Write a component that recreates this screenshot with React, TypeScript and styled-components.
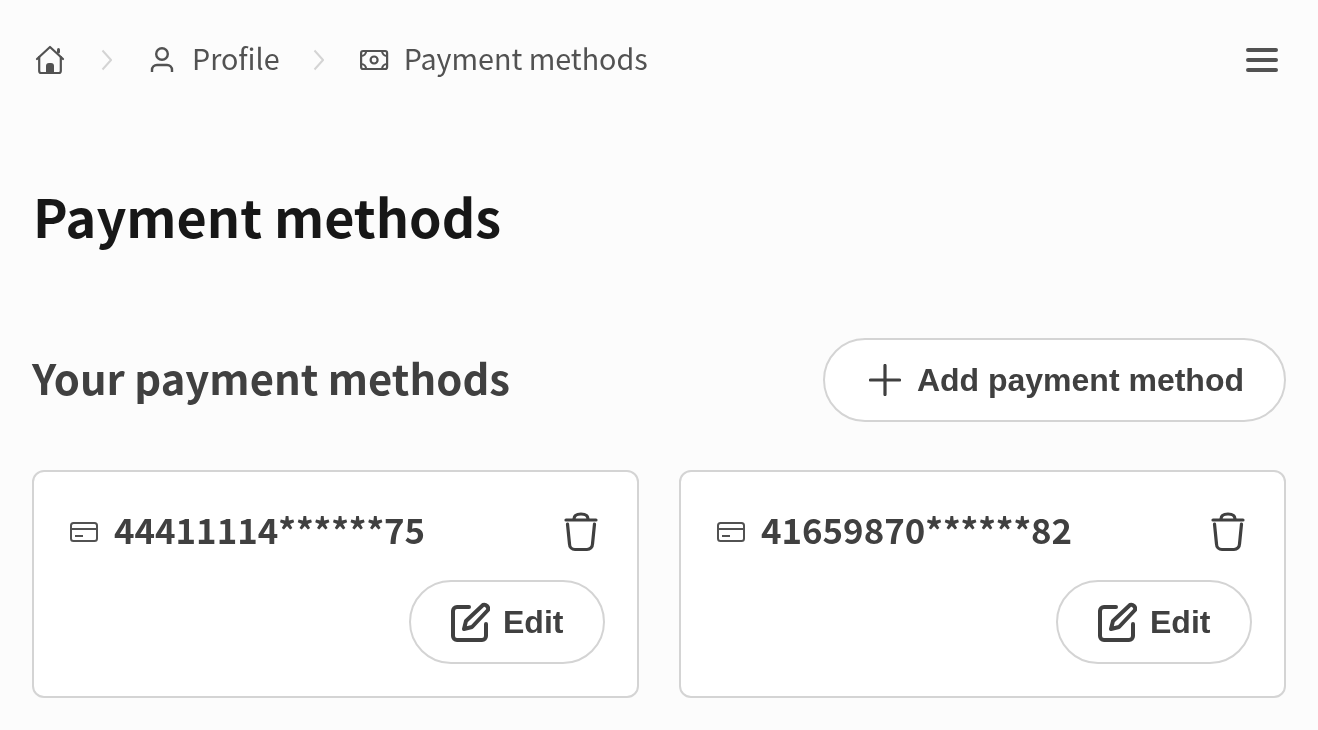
import React from "react";
import styled, { createGlobalStyle } from "styled-components";

const Global = createGlobalStyle`
  html, body { margin: 0; padding: 0; background: #fcfcfc; }
  body { font-family: "Noto Sans CJK JP", "Noto Sans", sans-serif; color: #404040; }
`;
const Page = styled.div`
  width: 1318px; height: 730px; box-sizing: border-box; padding: 32px 32px 0; overflow: hidden;
  display: flex; flex-direction: column; will-change: transform;
`;
const Nav = styled.nav`
  display: flex; align-items: center; justify-content: space-between; height: 56px; padding-right: 8px;
`;
const Crumbs = styled.div`display: flex; align-items: center; gap: 34px; padding-left: 2px;`;
const Crumb = styled.div<{ $gap?: number }>`
  display: flex; align-items: center; gap: ${p => p.$gap ?? 14}px; font-size: 28.7px; line-height: 56px; color: #525252;
`;
const CrumbLabel = styled.span`padding-bottom: 4px;`;
const Sep = styled.span<{ $pull?: number }>`
  display: flex; color: #d4d4d4; margin: 0 ${p => p.$pull ?? 0}px 0 ${p => -(p.$pull ?? 0)}px;
`;
const Title = styled.h1`
  margin: 96px 0 0; font-size: 52.1px; line-height: 64px; font-weight: 700; color: #171717; padding-left: 1px;
`;
const SectionHead = styled.div`
  display: flex; align-items: center; justify-content: space-between; margin-top: 90px;
`;
const H2 = styled.h2`margin: 0; font-size: 41.8px; line-height: 78px; padding-bottom: 6px; font-weight: 700; color: #404040;`;
const PillButton = styled.button`
  display: flex; align-items: center; box-sizing: border-box; height: 84px; border: 2px solid #d4d4d4;
  border-radius: 42px; background: #fff; color: #404040; cursor: pointer;
  font-family: "Liberation Sans", Arial, sans-serif; font-weight: 700; font-size: 32px;
  padding: 0 40px 0 44px; gap: 16px;
`;
const Cards = styled.div`display: grid; grid-template-columns: 607px 607px; gap: 40px; margin-top: 48px;`;
const Card = styled.div`
  box-sizing: border-box; height: 228px; border: 2px solid #d4d4d4; border-radius: 12px; background: #fff;
  padding: 32px 32px 32px 36px; display: flex; flex-direction: column; justify-content: space-between;
`;
const CardTop = styled.div`display: flex; align-items: center; justify-content: space-between; padding-right: 7px;`;
const CardNum = styled.div`
  display: flex; align-items: center; gap: 16px; font-size: 34.8px; font-weight: 700; line-height: 50px; color: #404040;
`;
const CardNumber = styled.span`padding-bottom: 6px;`;
const CardActions = styled.div`display: flex; justify-content: flex-end;`;
const EditButton = styled(PillButton)`padding: 0 0 0 39px; gap: 13px; width: 196px;`;

const Home = () => (
  <svg width="32" height="32" viewBox="0 0 32 32" fill="none" stroke="#525252" strokeWidth="2.2" strokeLinejoin="round" strokeLinecap="round">
    <path d="M3 15 L16 3 L29 15" />
    <path d="M5.200 13 V27 a2 2 0 0 0 2 2 H24.800 a2 2 0 0 0 2 -2 V13" />
    <path d="M24.500 8 V5.500" strokeWidth="3" />
    <path d="M12 29 V22 a3 3 0 0 1 3 -3 H17 a3 3 0 0 1 3 3 V29 Z" fill="#525252" stroke="none" />
  </svg>
);
const Chevron = () => (
  <svg width="12" height="22" viewBox="0 0 12 22" fill="none" stroke="currentColor" strokeWidth="2">
    <path d="M2.500 1.500 L11 11 L2.500 20.500" />
  </svg>
);
const User = () => (
  <svg width="30" height="28" viewBox="0 0 30 28" fill="none" stroke="#525252" strokeWidth="2.4">
    <circle cx="16" cy="8" r="5.800" />
    <path d="M6 26 V24 a5 5 0 0 1 5 -5 H21 a5 5 0 0 1 5 5 V26" />
  </svg>
);
const Money = () => (
  <svg width="30" height="24" viewBox="0 0 30 24" fill="none" stroke="#525252" strokeWidth="2.2">
    <rect x="1.100" y="3" width="26" height="18" rx="2" />
    <circle cx="14.100" cy="12" r="3.500" />
    <path d="M1.100 8 a5 5 0 0 0 5 -5 M22.100 3 a5 5 0 0 0 5 5 M1.100 16 a5 5 0 0 1 5 5 M22.100 21 a5 5 0 0 1 5 -5" />
  </svg>
);
const Menu = () => (
  <svg width="32" height="24" viewBox="0 0 32 24" fill="none" stroke="#525252" strokeWidth="4" strokeLinecap="round">
    <path d="M2 2 H30 M2 12 H30 M2 22 H30" />
  </svg>
);
const Plus = () => (
  <svg width="32" height="32" viewBox="0 0 32 32" fill="none" stroke="#404040" strokeWidth="3.200" strokeLinecap="round">
    <path d="M16 1.500 V30.500 M1.500 16 H30.500" />
  </svg>
);
const CardIcon = () => (
  <svg width="28" height="20" viewBox="0 0 28 20" fill="none" stroke="#525252" strokeWidth="2">
    <rect x="1" y="1" width="26" height="18" rx="2.500" />
    <path d="M1 7 H27 M5 14 H13" />
  </svg>
);
const Trash = () => (
  <svg width="34" height="42" viewBox="0 0 34 42" fill="none" stroke="#404040" strokeWidth="3.200" strokeLinecap="round" strokeLinejoin="round">
    <path d="M2 9 H32" />
    <path d="M10 8 C10 4 13 3 17 3 C21 3 24 4 24 8" />
    <path d="M3.500 13 L5.500 33 a5.500 5.500 0 0 0 5.500 5.500 H23 a5.500 5.500 0 0 0 5.500 -5.500 L30.500 13" />
  </svg>
);
const EditIcon = () => (
  <svg width="40" height="40" viewBox="0 0 40 40" fill="none" stroke="#404040" strokeWidth="4" strokeLinecap="round" strokeLinejoin="round">
    <path d="M19 5 H7 a4 4 0 0 0 -4 4 V34 a4 4 0 0 0 4 4 H32 a4 4 0 0 0 4 -4 V22" />
    <path d="M33 3 a4 4 0 0 1 5 5 L22 25 L14 27 L16 19 Z" />
  </svg>
);

const cards = ["44411114******75", "41659870******82"];

export default function App() {
  return (
    <Page>
      <Global />
      <Nav>
        <Crumbs>
          <Crumb><Home /></Crumb>
          <Sep><Chevron /></Sep>
          <Crumb $gap={16}><User /><CrumbLabel>Profile</CrumbLabel></Crumb>
          <Sep $pull={2}><Chevron /></Sep>
          <Crumb $gap={14}><Money /><CrumbLabel>Payment methods</CrumbLabel></Crumb>
        </Crumbs>
        <Menu />
      </Nav>
      <Title>Payment methods</Title>
      <SectionHead>
        <H2>Your payment methods</H2>
        <PillButton><Plus /><span>Add payment method</span></PillButton>
      </SectionHead>
      <Cards>
        {cards.map(c => (
          <Card key={c}>
            <CardTop>
              <CardNum><CardIcon /><CardNumber>{c}</CardNumber></CardNum>
              <Trash />
            </CardTop>
            <CardActions>
              <EditButton><EditIcon /><span>Edit</span></EditButton>
            </CardActions>
          </Card>
        ))}
      </Cards>
    </Page>
  );
}
